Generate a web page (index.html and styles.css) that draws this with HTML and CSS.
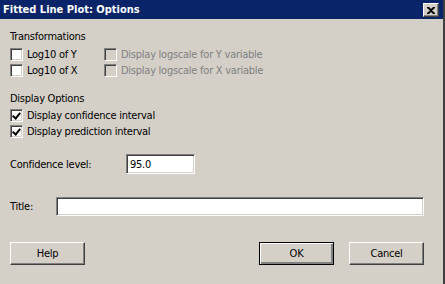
FILE: index.html
```html
<!DOCTYPE html>
<html lang="en">
<head>
  <meta charset="UTF-8" />
  <title>Fitted Line Plot: Options</title>
  <link rel="stylesheet" href="styles.css">
</head>
<body>
  <div class="dialog">
    <div class="titlebar">
      <span class="caption">Fitted Line Plot: Options</span>
      <button class="close-btn">
        <svg width="8" height="7" viewBox="0 0 8 7"><path d="M0 0h2l2 2 2-2h2v1L5 3.5 8 6v1H6L4 5 2 7H0V6l3-2.5L0 1z" fill="#000"/></svg>
      </button>
    </div>

    <div class="content">
      <div class="group-label">Transformations</div>
      <div class="trans-grid">
        <label class="check"><span class="box"></span>Log10 of Y</label>
        <label class="check disabled"><span class="box"></span>Display logscale for Y variable</label>
        <label class="check"><span class="box"></span>Log10 of X</label>
        <label class="check disabled"><span class="box"></span>Display logscale for X variable</label>
      </div>

      <div class="group-label second">Display Options</div>
      <div class="checks">
        <label class="check"><span class="box checked"></span>Display confidence interval</label>
        <label class="check"><span class="box checked"></span>Display prediction interval</label>
      </div>

      <div class="field conf">
        <span class="field-label">Confidence level:</span>
        <div class="input small">95.0</div>
      </div>

      <div class="field title-field">
        <span class="field-label">Title:</span>
        <div class="input wide"></div>
      </div>

      <div class="buttons">
        <button class="btn">Help</button>
        <div class="spacer"></div>
        <button class="btn default">OK</button>
        <button class="btn">Cancel</button>
      </div>
    </div>
  </div>
</body>
</html>
```

FILE: styles.css
```css
body {
  margin: 0;
  background-color: #d4d0c8;
  font-family: "DejaVu Sans Condensed", "DejaVu Sans", sans-serif;
  font-size: 11px;
  letter-spacing: -0.25px;
  color: #000;
}

.dialog {
  width: 443px;
  height: 284px;
  background-color: #d4d0c8;
  border-right: 2px solid #404040;
  display: flex;
  flex-direction: column;
}

.titlebar {
  height: 19px;
  background-color: #0a246a;
  display: flex;
  align-items: center;
  padding: 0 4px 0 3px;
}

.caption {
  color: #fff;
  font-weight: bold;
  font-size: 11px;
  letter-spacing: 0;
  flex: 1;
}

.close-btn {
  width: 16px;
  height: 14px;
  padding: 0;
  margin-top: 1px;
  background-color: #d4d0c8;
  border: 1px solid;
  border-color: #fff #404040 #404040 #fff;
  box-shadow: inset -1px -1px 0 #808080;
  display: flex;
  align-items: center;
  justify-content: center;
}

.content {
  padding: 10px 19px 0 10px;
}

.group-label {
  line-height: 16px;
}

.group-label.second {
  margin-top: 14px;
}

.trans-grid {
  display: grid;
  grid-template-columns: 94px auto;
  row-gap: 3px;
  margin-top: 3px;
}

.checks {
  display: flex;
  flex-direction: column;
  gap: 3px;
  margin-top: 2px;
}

.check {
  display: flex;
  align-items: center;
  gap: 4px;
  line-height: 13px;
}

.check.disabled {
  color: #808080;
}

.box {
  width: 11px;
  height: 11px;
  background-color: #fff;
  border: 1px solid;
  border-color: #808080 #fff #fff #808080;
  box-shadow: inset 1px 1px 0 #404040, inset -1px -1px 0 #d4d0c8;
  position: relative;
}

.check.disabled .box {
  background-color: #d4d0c8;
}

.box.checked::after {
  content: "";
  position: absolute;
  left: 3px;
  top: 1px;
  width: 3px;
  height: 6px;
  border: solid #000;
  border-width: 0 2px 2px 0;
  transform: rotate(40deg);
}

.field {
  display: flex;
  align-items: center;
}

.field.conf {
  margin-top: 16px;
}

.field.title-field {
  margin-top: 23px;
}

.field-label {
  width: 46px;
}

.conf .field-label {
  width: 116px;
}

.input {
  height: 16px;
  background-color: #fff;
  border: 1px solid;
  border-color: #808080 #fff #fff #808080;
  box-shadow: inset 1px 1px 0 #404040, inset -1px -1px 0 #d4d0c8;
  padding: 2px 3px 0;
  line-height: 16px;
}

.input.small {
  width: 61px;
}

.input.wide {
  flex: 1;
  height: 15px;
}

.buttons {
  display: flex;
  gap: 15px;
  margin-top: 26px;
}

.spacer {
  flex: 1;
}

.btn {
  width: 75px;
  height: 23px;
  font-family: inherit;
  font-size: 11px;
  letter-spacing: inherit;
  background-color: #d4d0c8;
  border: 1px solid;
  border-color: #fff #404040 #404040 #fff;
  box-shadow: inset -1px -1px 0 #808080;
  padding: 0;
}

.btn.default {
  border-color: #000;
  box-shadow: inset 1px 1px 0 #fff, inset -2px -2px 0 #808080;
}
```
